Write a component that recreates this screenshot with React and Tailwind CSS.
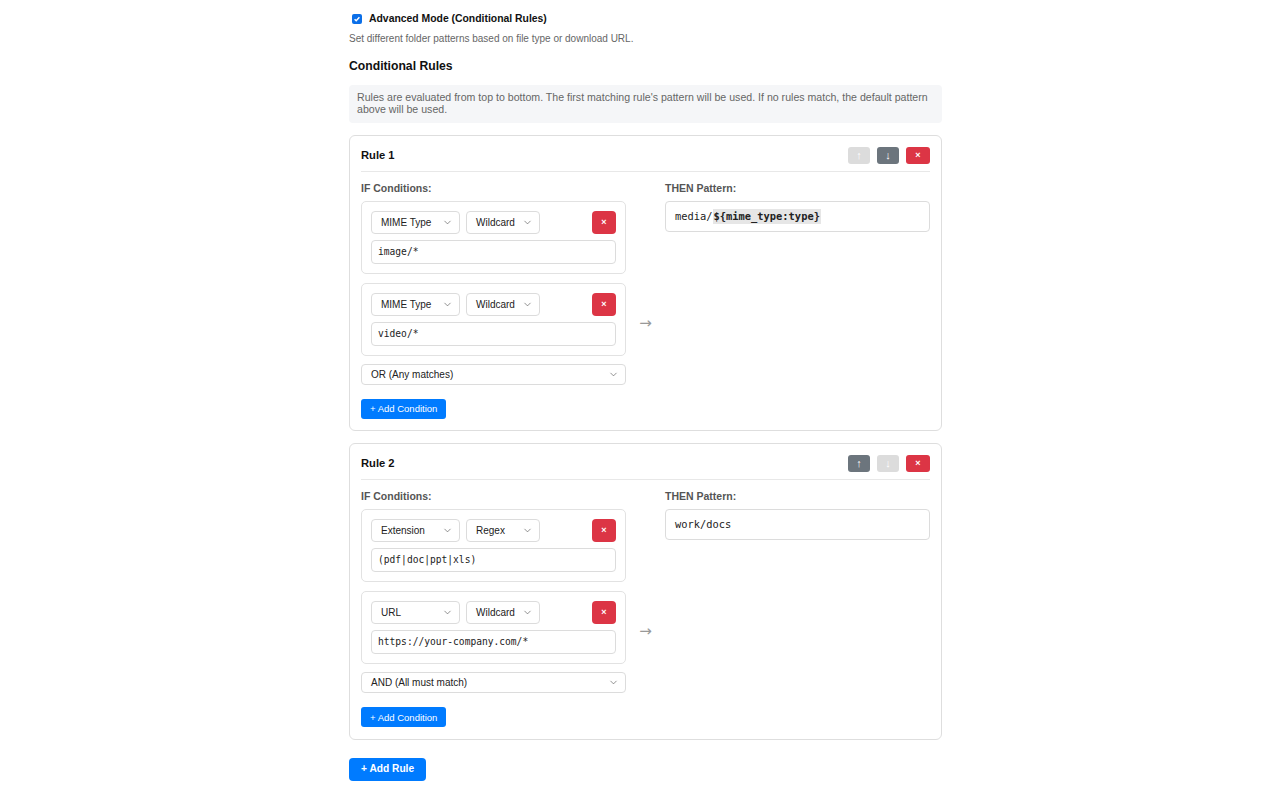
import { ChevronDown } from 'lucide-react'

const sans = { fontFamily: '"Liberation Sans", Arial, sans-serif' }

function Select({ value, className }) {
  return (
    <div
      className={`flex items-center justify-between pl-[9px] pr-[6px] border border-[#dcdcdc] rounded-[4px] bg-white text-[10px] leading-[12px] text-[#222] ${className}`}
    >
      <span>{value}</span>
      <ChevronDown size={11} strokeWidth={1.4} className="text-[#555]" />
    </div>
  )
}

function MonoInput({ children, className }) {
  return (
    <div
      className={`flex items-center border border-[#dcdcdc] rounded-[4px] bg-white text-[#222] font-['DejaVu_Sans_Mono',monospace] ${className}`}
    >
      {children}
    </div>
  )
}

function Condition({ field, match, value }) {
  return (
    <div className="border border-[#e2e2e2] rounded-[5px] p-[9px] flex flex-col gap-[6px]">
      <div className="flex items-center gap-[6px]">
        <Select value={field} className="w-[89px] h-[23px]" />
        <Select value={match} className="w-[74px] h-[23px]" />
        <button className="ml-auto w-[24px] h-[23px] rounded-[4px] bg-[#dc3545] text-white text-[9px] font-bold leading-none">
          ×
        </button>
      </div>
      <MonoInput className="h-[24px] px-[6px] text-[9.6px]">{value}</MonoInput>
    </div>
  )
}

function Rule({ title, upActive, downActive, conditions, logic, pattern }) {
  return (
    <div className="border border-[#dedede] rounded-[6px] px-[11px] pt-[11px] pb-[11px]">
      <div className="flex items-center justify-between pb-[7px] border-b border-[#e8e8e8]">
        <h3 className="text-[11.2px] leading-[17px] font-bold text-[#111]">{title}</h3>
        <div className="flex gap-[7px]">
          <button
            className={`w-[22px] h-[17px] rounded-[3px] text-white text-[11px] leading-none ${upActive ? 'bg-[#6c757d]' : 'bg-[#dcdcdc]'}`}
          >
            ↑
          </button>
          <button
            className={`w-[22px] h-[17px] rounded-[3px] text-white text-[11px] leading-none ${downActive ? 'bg-[#6c757d]' : 'bg-[#dcdcdc]'}`}
          >
            ↓
          </button>
          <button className="w-[24px] h-[17px] rounded-[3px] bg-[#dc3545] text-white text-[9px] font-bold leading-none">
            ×
          </button>
        </div>
      </div>

      <div className="flex pt-[10px]">
        {/* IF column */}
        <div className="w-[265px] shrink-0">
          <div className="text-[10.5px] leading-[13px] font-bold text-[#555] mb-[6px]">IF Conditions:</div>
          <div className="flex flex-col gap-[9px]">
            {conditions.map((c, i) => (
              <Condition key={i} {...c} />
            ))}
          </div>
          <Select value={logic} className="w-full mt-[8px] h-[21px] pl-[9px]" />
          <button className="mt-[14px] h-[20px] px-[9px] rounded-[3px] bg-[#007bff] text-white text-[9.5px] leading-none">
            + Add Condition
          </button>
        </div>

        <div className="w-[39px] shrink-0 flex justify-center mt-[133px] h-[16px] leading-[16px] text-[#999] text-[15px] font-['DejaVu_Sans',sans-serif]">
          →
        </div>

        {/* THEN column */}
        <div className="flex-1">
          <div className="text-[10.5px] leading-[13px] font-bold text-[#555] mb-[6px]">THEN Pattern:</div>
          <MonoInput className="h-[31px] px-[9px] text-[10.4px]">{pattern}</MonoInput>
        </div>
      </div>
    </div>
  )
}

export default function App() {
  return (
    <div className="min-h-screen bg-white" style={sans}>
      <div className="w-[593px] ml-[349px] pt-[12px] pb-[20px]">
        <label className="flex items-center gap-[7px] pl-[3px] h-[14px]">
          <span className="w-[10px] h-[10px] rounded-[2px] bg-[#0b6fe8] flex items-center justify-center">
            <svg width="8" height="8" viewBox="0 0 10 10">
              <path d="M2 5.2l2 2 4-4.5" fill="none" stroke="white" strokeWidth="1.8" />
            </svg>
          </span>
          <span className="text-[10.4px] leading-[14px] font-bold text-[#111]">Advanced Mode (Conditional Rules)</span>
        </label>
        <p className="text-[10px] leading-[14px] text-[#666] mt-[6px]">
          Set different folder patterns based on file type or download URL.
        </p>

        <h2 className="text-[12.2px] leading-[16px] font-bold text-[#111] mt-[12px]">Conditional Rules</h2>

        <div className="mt-[11px] bg-[#f5f6f8] rounded-[4px] pl-[8px] pr-[6px] pt-[6px] pb-[8px] text-[10.6px] leading-[12px] text-[#666]">
          Rules are evaluated from top to bottom. The first matching rule's pattern will be used. If no
          rules match, the default pattern above will be used.
        </div>

        <div className="flex flex-col gap-[12px] mt-[12px]">
          <Rule
            title="Rule 1"
            upActive={false}
            downActive={true}
            conditions={[
              { field: 'MIME Type', match: 'Wildcard', value: 'image/*' },
              { field: 'MIME Type', match: 'Wildcard', value: 'video/*' },
            ]}
            logic="OR (Any matches)"
            pattern={
              <>
                media/
                <span className="bg-[#e6e6e6] font-bold px-[1px]">{'${mime_type:type}'}</span>
              </>
            }
          />
          <Rule
            title="Rule 2"
            upActive={true}
            downActive={false}
            conditions={[
              { field: 'Extension', match: 'Regex', value: '(pdf|doc|ppt|xls)' },
              { field: 'URL', match: 'Wildcard', value: 'https://your-company.com/*' },
            ]}
            logic="AND (All must match)"
            pattern="work/docs"
          />
        </div>

        <button className="mt-[18px] h-[23px] px-[12px] rounded-[4px] bg-[#007bff] text-white text-[10.2px] font-bold leading-none">
          + Add Rule
        </button>
      </div>
    </div>
  )
}
